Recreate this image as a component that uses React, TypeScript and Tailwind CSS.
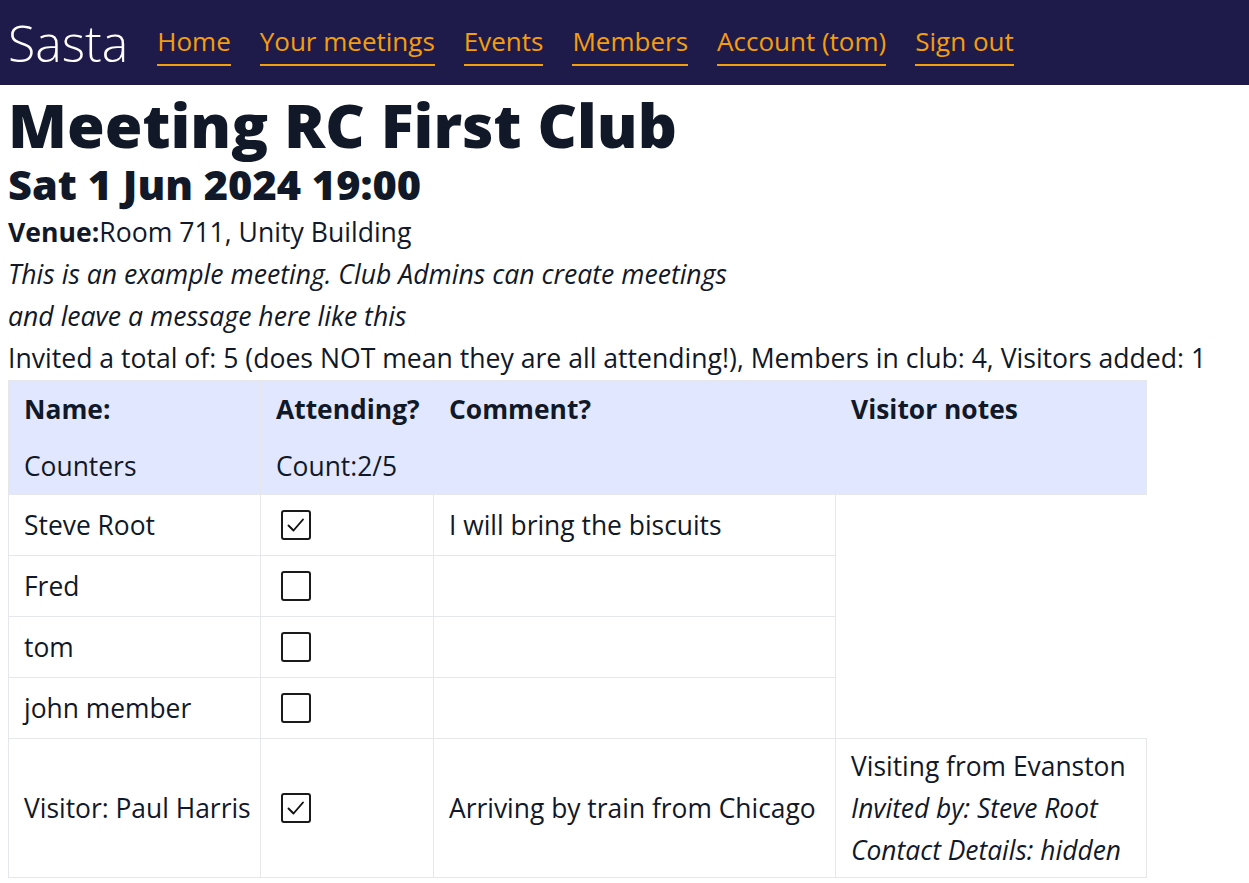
import React from 'react'

const font = { fontFamily: '"Open Sans", "Noto Sans", sans-serif' }

function Box({ checked }: { checked: boolean }) {
  return (
    <span className="flex h-[30px] w-[30px] items-center justify-center rounded-[3px] border-2 border-[#1a1a1a] bg-white">
      {checked && (
        <svg width="24" height="24" viewBox="0 0 24 24" fill="none">
          <path d="M4.5 12.5l5 5 9.5-11" stroke="#111" strokeWidth="1.9" strokeLinecap="round" strokeLinejoin="round" />
        </svg>
      )}
    </span>
  )
}

const links = ['Home', 'Your meetings', 'Events', 'Members', 'Account (tom)', 'Sign out']

const members = [
  { name: 'Steve Root', checked: true, comment: 'I will bring the biscuits' },
  { name: 'Fred', checked: false, comment: '' },
  { name: 'tom', checked: false, comment: '' },
  { name: 'john member', checked: false, comment: '' },
]

const cell = 'border border-[#e5e7eb] px-[15px] whitespace-nowrap'

export default function App() {
  return (
    <div className="min-h-screen bg-white text-[#111827]" style={font}>
      {/* Header */}
      <header className="flex h-[85px] items-center gap-[29px] bg-[#1e1b4b] px-2">
        <span className="text-[50px] font-light leading-none text-white">Sasta</span>
        <nav className="flex items-center gap-[29px] pt-[4px]">
          {links.map((l) => (
            <a key={l} href="#" className="border-b-2 border-[#f59e0b] pb-[6px] text-[26px] leading-[34px] text-[#f59e0b]">
              {l}
            </a>
          ))}
        </nav>
      </header>

      <main className="px-2">
        <h1 className="pt-[8px] text-[61px] font-extrabold leading-[64px]">Meeting RC First Club</h1>
        <h2 className="pt-[4px] text-[41.5px] font-extrabold leading-[46px]">Sat 1 Jun 2024 19:00</h2>
        <div className="pt-[4px] pb-[1px] text-[26.6px] leading-[42px]">
          <p>
            <span className="font-bold">Venue:</span>Room 711, Unity Building
          </p>
          <p className="italic">This is an example meeting. Club Admins can create meetings</p>
          <p className="italic">and leave a message here like this</p>
          <p>Invited a total of: 5 (does NOT mean they are all attending!), Members in club: 4, Visitors added: 1</p>
        </div>

        <table className="w-[1138px] table-fixed text-[26.4px] leading-[30px]">
          <colgroup>
            <col className="w-[252px]" />
            <col className="w-[173px]" />
            <col className="w-[402px]" />
            <col className="w-[311px]" />
          </colgroup>
          <thead>
            <tr className="bg-[#e0e7ff]">
              <th className={`${cell} py-[13px] text-left font-bold`}>Name:</th>
              <th className={`${cell} py-[13px] text-left font-bold`}>Attending?</th>
              <th className={`${cell} py-[13px] text-left font-bold`}>Comment?</th>
              <th className={`${cell} py-[13px] text-left font-bold`}>Visitor notes</th>
            </tr>
            <tr className="bg-[#e0e7ff]">
              <td className={`${cell} py-[13px]`}>Counters</td>
              <td className={`${cell} py-[13px]`}>Count:2/5</td>
              <td className={`${cell} py-[13px]`}></td>
              <td className={`${cell} py-[13px]`}></td>
            </tr>
          </thead>
          <tbody>
            {members.map((m) => (
              <tr key={m.name}>
                <td className={`${cell} py-[15px]`}>{m.name}</td>
                <td className="border border-[#e5e7eb] px-[20px] py-[15px]">
                  <Box checked={m.checked} />
                </td>
                <td className={`${cell} py-[15px]`}>{m.comment}</td>
              </tr>
            ))}
            <tr>
              <td className={`${cell} py-[6px]`}>Visitor: Paul Harris</td>
              <td className="border border-[#e5e7eb] px-[20px] py-[6px]">
                <Box checked />
              </td>
              <td className={`${cell} py-[6px]`}>Arriving by train from Chicago</td>
              <td className={`${cell} py-[6px] leading-[42px]`}>
                <div>Visiting from Evanston</div>
                <div className="italic">Invited by: Steve Root</div>
                <div className="italic">Contact Details: hidden</div>
              </td>
            </tr>
          </tbody>
        </table>
      </main>
    </div>
  )
}
